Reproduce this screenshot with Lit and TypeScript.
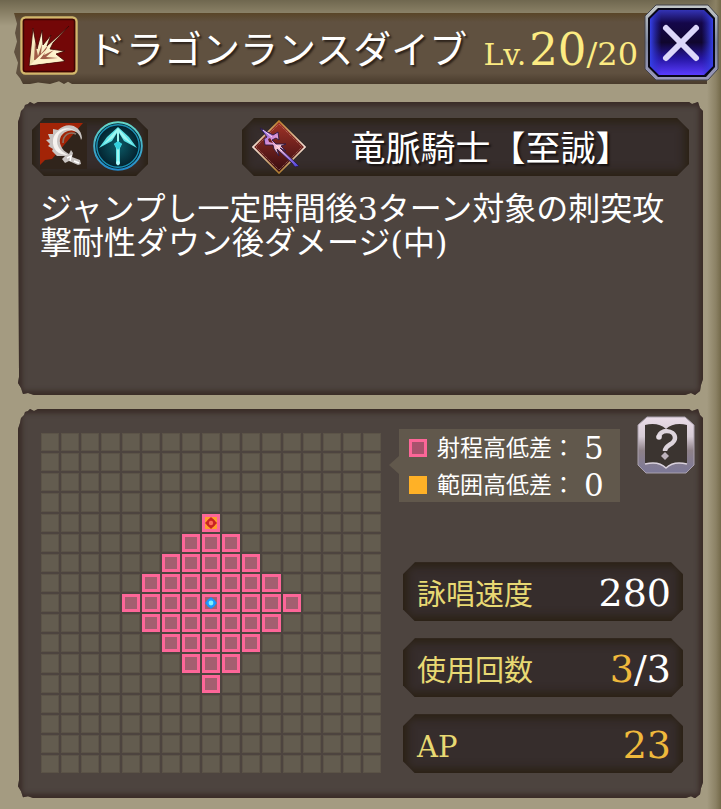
import { LitElement, html, css, svg } from "lit";
import { customElement, property } from "lit/decorators.js";
import { classMap } from "lit/directives/class-map.js";

const SIZE = 17;
const CENTER = 8;
const REACH = 4;

@customElement("range-grid")
class RangeGrid extends LitElement {
  static styles = css`
    :host { display: block; }
    .grid { display: grid; grid-template-columns: repeat(17, 1fr); gap: 2px; }
    .cell {
      aspect-ratio: 1;
      box-sizing: border-box;
      background: #635c4f;
      border: 1px solid #5b5347;
      display: grid;
      place-items: center;
    }
    .range { background: #a45f70; border: 3px solid #fd6698; }
    .target { background: #ff9d2c; }
    .mark { display: block; width: 12px; height: 12px; }
  `;
  private mark(x: number, y: number) {
    if (x === CENTER && y === CENTER) {
      return html`<svg class="mark" viewBox="0 0 12 12">
        <path d="M6 0 12 6 6 12 0 6Z" fill="#1c8ef0" /><circle cx="6" cy="6" r="4.6" fill="#1c98ff" />
        <circle cx="6" cy="6" r="2.4" fill="#7ff0ff" /></svg>`;
    }
    if (x === CENTER && y === CENTER - REACH) {
      return html`<svg class="mark" viewBox="0 0 12 12">
        <path d="M6 0 12 6 6 12 0 6Z" fill="#c92222" /><circle cx="6" cy="6" r="4.4" fill="#c92222" /><circle cx="6" cy="6" r="2.2" fill="#ff6a58" /></svg>`;
    }
    return "";
  }
  render() {
    const cells = Array.from({ length: SIZE * SIZE }, (_, i) => {
      const x = i % SIZE;
      const y = Math.floor(i / SIZE);
      const range = Math.abs(x - CENTER) + Math.abs(y - CENTER) <= REACH;
      const target = x === CENTER && y === CENTER - REACH;
      return html`<div class=${classMap({ cell: true, range, target })}>${this.mark(x, y)}</div>`;
    });
    return html`<div class="grid">${cells}</div>`;
  }
}

@customElement("stat-row")
class StatRow extends LitElement {
  @property() label = "";
  @property() accent = "";
  @property() value = "";
  static styles = css`
    :host { display: block; }
    .row {
      display: flex;
      align-items: center;
      justify-content: space-between;
      height: 59px;
      padding: 0 12px 0 14px;
      box-sizing: border-box;
      background: #362d2c;
      box-shadow: inset 0 0 10px 4px #2a2012;
      clip-path: polygon(12px 0, calc(100% - 12px) 0, 100% 12px, 100% calc(100% - 12px), calc(100% - 12px) 100%, 12px 100%, 0 calc(100% - 12px), 0 12px);
      font-family: "DejaVu Serif", "Noto Sans CJK JP", serif;
    }
    .label { color: #e8d973; font-size: 29px; line-height: 40px; padding-top: 6px; }
    .value { color: #fff; font-size: 38px; line-height: 44px; padding-top: 2px; }
    .accent { color: #efb93c; }
  `;
  render() {
    return html`<div class="row">
      <span class="label">${this.label}</span>
      <span class="value"><span class="accent">${this.accent}</span>${this.value}</span>
    </div>`;
  }
}

const burstIcon = svg`
  <defs><linearGradient id="gold" x1="1" y1="0" x2="0" y2="1">
    <stop offset="0" stop-color="#c9ad86" /><stop offset=".5" stop-color="#fff6d2" /><stop offset="1" stop-color="#ead9a4" />
  </linearGradient></defs>
  <rect x="1" y="1" width="56" height="57" rx="4" fill="#3f2510" />
  <rect x="1.5" y="1.5" width="55" height="56" rx="4" fill="#730707" stroke="#d1b76c" stroke-width="2.4" />
  <rect x="3.5" y="3.5" width="51" height="52" rx="2" fill="none" stroke="#3d0503" stroke-width="1.4" />
  <path d="M49 10 33 27 30 33 45 35 36 38 45 45 9 50 13 12 17 33 22 14 23 29 31 19 27 30Z" fill="url(#gold)" stroke="#3d0503" stroke-width=".8" />
  <path d="M14 44 15 26 18 40 22 28 21 38 28 29 24 39 34 34 26 41 38 42Z" fill="#7a2115" opacity=".7" />
  <path d="M10 49 31 29 20 43 44 45Z" fill="#fff2ca" />`;

const closeIcon = svg`
  <defs>
    <linearGradient id="rim" x1="0" y1="0" x2="0" y2="1"><stop offset="0" stop-color="#c5c9c9" /><stop offset=".5" stop-color="#7e88a0" /><stop offset="1" stop-color="#9a98bb" /></linearGradient>
    <linearGradient id="blue" x1="0" y1="0" x2="0" y2="1"><stop offset="0" stop-color="#3333b4" /><stop offset=".2" stop-color="#14074a" /><stop offset=".5" stop-color="#10062e" /><stop offset=".75" stop-color="#2716a5" /><stop offset="1" stop-color="#5a3cff" /></linearGradient>
    <linearGradient id="side"><stop offset="0" stop-color="#3540e8" /><stop offset=".18" stop-color="#2c30c8" stop-opacity="0" /><stop offset=".82" stop-color="#2c30c8" stop-opacity="0" /><stop offset="1" stop-color="#3540e8" /></linearGradient>
  </defs>
  <path d="M12 1H64L74 12V65L64 76H12L1 65V12Z" fill="url(#rim)" stroke="#42434a" />
  <path d="M14 4H62L71 14V63L62 73H14L4 63V14Z" fill="#080717" />
  <path d="M15 6H60L69 15V62L60 71H15L6 62V15Z" fill="url(#blue)" />
  <path d="M15 6H60L69 15V62L60 71H15L6 62V15Z" fill="url(#side)" />
  <path d="M22 24 52 54M52 24 22 54" stroke="#dcd7fa" stroke-width="6" stroke-linecap="round" />`;

const slashIcon = svg`
  <rect width="47" height="46" fill="#30241b" />
  <path d="M0 0H43L12 36 5 37 0 42Z" fill="#a22407" />
  <path d="M41 17C40 10 34 6 28 8 21 10 18 17 21 23 22 26 25 29 29 31L31 27 33 30 32 34 40 37 41 41 38 42 29 38 25 40 22 36 25 33 17 33 12 28 13 26 8 23 10 21 6 17 10 16 8 11 13 11 13 6 18 7C27 -2 41 2 42 15Z" fill="#c9c4c2" />
  <path d="M38 10C31 4 21 6 18 13 15 21 19 28 28 32 18 32 12 26 13 17 14 7 28 0 38 10Z" fill="#f5f2ef" />
  <path d="M36 11C29 8 23 12 23 20" fill="none" stroke="#8a7466" stroke-width="1.6" />
  <path d="M27 35 31 33 30 38M34 38 39 40" fill="none" stroke="#fff" stroke-width="1.4" />`;

const arrowIcon = svg`
  <defs><radialGradient id="deep"><stop offset="0" stop-color="#0c5b68" /><stop offset=".7" stop-color="#052f3b" /><stop offset="1" stop-color="#021a28" /></radialGradient>
  <linearGradient id="ring" x1="0" y1="0" x2="0" y2="1"><stop offset="0" stop-color="#65d8c9" /><stop offset="1" stop-color="#2288c9" /></linearGradient></defs>
  <circle cx="25" cy="25" r="23.8" fill="url(#deep)" stroke="url(#ring)" stroke-width="2" />
  <circle cx="25" cy="25" r="21.2" fill="none" stroke="#1b91b3" stroke-width="1.4" />
  <path d="M25 6 36 16 44 27 31 20 26 12V21L29 23 27 27V41L25 45 23 41V27L21 23 24 21V12L19 20 6 27 14 16Z" fill="#5be2e6" />
  <path d="M25 7 34 17 40 24 30 17 26 11V42H24V11L20 17 10 24 16 17Z" fill="#9ff6f0" />
  <path d="M21 23 25 20 29 23 25 29Z" fill="#33cfdd" /><circle cx="25" cy="42" r="2" fill="#b4ffff" />`;

const lanceIcon = svg`
  <defs><linearGradient id="red" x1="0" y1="0" x2="0" y2="1"><stop offset="0" stop-color="#a33427" /><stop offset=".5" stop-color="#6c201c" /><stop offset="1" stop-color="#350b10" /></linearGradient>
  <linearGradient id="edge" x1="0" y1="0" x2="0" y2="1"><stop offset="0" stop-color="#bd812d" /><stop offset=".5" stop-color="#f4dfd7" /><stop offset="1" stop-color="#ae7c2e" /></linearGradient>
  <linearGradient id="lance" gradientUnits="userSpaceOnUse" x1="8" y1="8" x2="46" y2="46"><stop offset="0" stop-color="#5a55e6" /><stop offset=".3" stop-color="#d78fd6" /><stop offset=".5" stop-color="#f7c9cf" /><stop offset=".7" stop-color="#b98ae0" /><stop offset="1" stop-color="#4a44e0" /></linearGradient></defs>
  <path d="M27 1 53 27 27 53 1 27Z" fill="url(#red)" stroke="url(#edge)" stroke-width="1.6" />
  <path d="M27 4 50 27 27 50 4 27Z" fill="none" stroke="#ce9a86" stroke-width=".7" stroke-dasharray="1 1" />
  <path d="M8 8 21 15 26 12 27 20 24 18 20 20 24 24 34 24 29 26 34 31 28 28 44 43 47 46 43 47 40 43 25 29 27 36 22 29 21 25 13 25 12 19 15 17Z" fill="url(#lance)" stroke="#2a1a45" stroke-width=".9" />
  <path d="M16 19 17 22 21 23 18 18Z" fill="#6c201c" />
  <path d="M11 10 20 17M24 25 30 31" fill="none" stroke="#ffd7ee" stroke-width="1" />`;

const helpIcon = svg`
  <defs><linearGradient id="silver" x1="0" y1="0" x2="0" y2="1"><stop offset="0" stop-color="#eadce8" /><stop offset=".35" stop-color="#d6cbd5" /><stop offset=".6" stop-color="#8e8188" /><stop offset="1" stop-color="#7c7898" /></linearGradient></defs>
  <path d="M10 1H48L57 9V49L49 57H9L1 49V9Z" fill="url(#silver)" stroke="#a9a0ac" />
  <path d="M8 9C16 7 24 8 29 13 34 8 42 7 50 9V48C42 46 34 47 29 52 24 47 16 46 8 48Z" fill="#3b3430" />
  <path d="M8 48C16 46 24 47 29 52 34 47 42 46 50 48" fill="none" stroke="#d9d1dd" stroke-width="1.5" />
  <path d="M22 21C22 13 38 13 38 22 38 29 28 28 28 35" fill="none" stroke="#ddd4dc" stroke-width="4.5" />
  <circle cx="22" cy="21" r="2.8" fill="#e6dde5" /><path d="M28 36 32 40 28 44 24 40Z" fill="#bdb2bb" />`;

@customElement("app-root")
class AppRoot extends LitElement {
  static styles = css`
    :host {
      display: block;
      min-height: 100vh;
      box-sizing: border-box;
      font-family: "DejaVu Serif", "Noto Sans CJK JP", serif;
      color: #fff;
      background:
        linear-gradient(to left, #746a4a 0, #8b8164 5px, transparent 14px),
        linear-gradient(#6f674f 0, #82795f 9px, #a49b81 26px);
      background-color: #a49b81;
    }
    svg { display: block; }
    button { padding: 0; border: 0; background: none; display: block; flex: none; cursor: pointer; }
    .header {
      position: relative;
      display: flex;
      align-items: flex-start;
      box-sizing: border-box;
      padding: 4px 2px 0 20px;
      height: 84px;
    }
    .header::before {
      content: "";
      position: absolute;
      inset: 13px 14px 0 14px;
      background: linear-gradient(#594527 0, #605140 9px, #605140 60px, #493b2c 100%);
      clip-path: polygon(0 0, 100% 0, 100% 100%, 58px 100%, 54px 97%, 50px 100%, 45px 96%, 36px 100%, 24px 98%, 16px 100%, 9px 100%, 6px 92%, 2px 85%, 4px 70%, 0 55%, 3px 40%, 1px 28%, 3px 15%);
    }
    .header > * { position: relative; }
    .skill { width: 58px; height: 59px; flex: none; margin-top: 12px; }
    .title {
      margin: 0 auto 0 10px;
      font-size: 38px;
      line-height: 60px;
      font-weight: 400;
      white-space: nowrap;
      padding-top: 16px;
      text-shadow: 2px 2px 2px #2c221a;
    }
    .level { display: flex; align-items: baseline; color: #fceb82; font-size: 30px; line-height: 60px; margin-right: 6px; padding-top: 16px; }
    .now { font-size: 45px; margin-left: 3px; }
    .max { font-size: 32px; }
    .close { width: 75px; height: 77px; }
    .main { display: grid; gap: 14px; padding: 18px 18px 9px; }
    .panel {
      box-sizing: border-box;
      background: #4d443f;
      box-shadow: inset 0 0 5px 4px #3a2b27;
      clip-path: polygon(3px 9px, 6px 6px, 7px 3px, 10px 2px, 12px 0, 16px 2px, 20px 0, calc(100% - 14px) 0, calc(100% - 11px) 2px, calc(100% - 5px) 0, calc(100% - 3px) 6px, 100% 9px, 100% calc(100% - 16px), calc(100% - 2px) calc(100% - 10px), calc(100% - 3px) calc(100% - 4px), calc(100% - 8px) 100%, calc(100% - 12px) calc(100% - 2px), calc(100% - 18px) 100%, 16px 100%, 10px calc(100% - 2px), 5px calc(100% - 1px), 3px calc(100% - 7px), 0 calc(100% - 12px), 1px calc(100% - 18px), 0 20px, 2px 14px);
    }
    .about { min-height: 293px; padding: 16px 14px; }
    .tags { display: flex; justify-content: space-between; gap: 20px; }
    .pill {
      display: flex;
      align-items: center;
      height: 58px;
      box-sizing: border-box;
      background: #362d2c;
      box-shadow: inset 0 0 10px 4px #2a2012;
      clip-path: polygon(12px 0, calc(100% - 12px) 0, 100% 12px, 100% calc(100% - 12px), calc(100% - 12px) 100%, 12px 100%, 0 calc(100% - 12px), 0 12px);
    }
    .types { padding: 0 5px 3px 8px; gap: 6px; }
    .job { flex: 0 1 447px; padding: 0 14px 0 10px; }
    .job-name { flex: 1; text-align: center; font-size: 35px; line-height: 50px; padding-top: 4px; white-space: nowrap; text-shadow: 2px 2px 2px #161010; }
    .text { margin: 16px 0 0 8px; font-size: 32px; line-height: 34px; }
    .detail { display: flex; gap: 18px; padding: 7px 8px 25px 23px; }
    .map { flex: 340; min-width: 0; margin-top: 17px; }
    .side { flex: 296; min-width: 0; display: flex; flex-direction: column; justify-content: space-between; }
    .top { display: flex; justify-content: space-between; align-items: flex-start; }
    .legend { position: relative; width: 221px; height: 73px; box-sizing: border-box; margin-top: 13px; padding: 0 10px; background: #61584c; }
    .legend::before {
      content: "";
      position: absolute;
      left: -10px;
      top: 27px;
      border: solid transparent;
      border-width: 9px 10px 9px 0;
      border-right-color: #61584c;
    }
    .line { display: flex; align-items: center; font-size: 23px; line-height: 36px; height: 37px; white-space: nowrap; }
    .chip { width: 18px; height: 18px; box-sizing: border-box; margin-right: 10px; flex: none; background: #ffb126; }
    .pink { background: #a9526d; border: 3px solid #fd6698; }
    .num { font-size: 31px; margin-left: 9px; }
    .stats { display: grid; gap: 17px; margin: 0 12px 0 4px; }
  `;

  render() {
    return html`
      <header class="header">
        <svg class="skill" viewBox="0 0 58 59" aria-hidden="true">${burstIcon}</svg>
        <h1 class="title">ドラゴンランスダイブ</h1>
        <div class="level"><span>Lv.</span><span class="now">20</span><span class="max">/20</span></div>
        <button class="close" aria-label="閉じる"><svg width="75" height="77" viewBox="0 0 75 77" fill="none">${closeIcon}</svg></button>
      </header>
      <main class="main">
        <section class="panel about">
          <div class="tags">
            <div class="pill types">
              <svg width="47" height="46" viewBox="0 0 47 46" aria-hidden="true">${slashIcon}</svg>
              <svg width="50" height="50" viewBox="0 0 50 50" aria-hidden="true">${arrowIcon}</svg>
            </div>
            <div class="pill job">
              <svg width="54" height="54" viewBox="0 0 54 54" aria-hidden="true">${lanceIcon}</svg>
              <span class="job-name">竜脈騎士【至誠】</span>
            </div>
          </div>
          <p class="text">ジャンプし一定時間後3ターン対象の刺突攻撃耐性ダウン後ダメージ(中)</p>
        </section>
        <section class="panel detail">
          <range-grid class="map"></range-grid>
          <div class="side">
            <div class="top">
              <div class="legend">
                <div class="line"><span class="chip pink"></span>射程高低差：<span class="num">5</span></div>
                <div class="line"><span class="chip"></span>範囲高低差：<span class="num">0</span></div>
              </div>
              <button aria-label="ヘルプ"><svg width="58" height="59" viewBox="0 0 58 59">${helpIcon}</svg></button>
            </div>
            <div class="stats">
              <stat-row label="詠唱速度" value="280"></stat-row>
              <stat-row label="使用回数" accent="3" value="/3"></stat-row>
              <stat-row label="AP" accent="23"></stat-row>
            </div>
          </div>
        </section>
      </main>
    `;
  }
}
